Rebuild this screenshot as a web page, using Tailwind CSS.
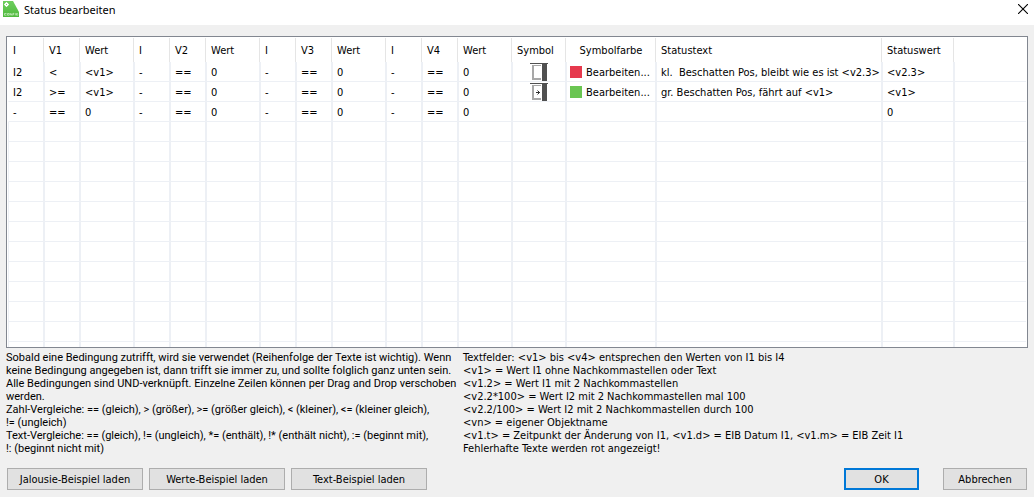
<!DOCTYPE html>
<html lang="de">
<head>
<meta charset="utf-8">
<title>Status bearbeiten</title>
<script src="https://cdn.jsdelivr.net/npm/@tailwindcss/browser@4"></script>
</head>
<body class="flex min-h-screen flex-col overflow-hidden bg-[#f0f0f0] font-['DejaVu_Sans_Condensed','DejaVu_Sans',sans-serif] text-[11px] leading-[13px] text-black">

<header class="flex h-[25px] items-start bg-white pl-[3px] pr-1.5">
  <svg class="size-4 shrink-0 mt-px" viewBox="0 0 16 16" aria-hidden="true">
    <defs><linearGradient id="g" x1="0" y1="0" x2="0" y2="1"><stop offset="0" stop-color="#6fcf5f"/><stop offset="1" stop-color="#4fb83c"/></linearGradient></defs>
    <path d="M0 0H10L16 11V16H0Z" fill="url(#g)"/>
    <circle cx="3.500" cy="3.500" r="1.300" fill="none" stroke="#fff" stroke-width="1.400"/>
    <path d="M3.500 1v1M3.500 5v1M1 3.500h1M5 3.500h1" stroke="#fff" stroke-width=".8"/>
    <path d="M1.500 12.500h2M1.500 14.200h2M1.500 12.500v1.700M4.500 12.500h1.700v1.700h-1.700zM7.300 14.400v-2l1.500 2v-2M9.900 14.400v-2h1.300M9.900 13.300h1M12.300 12.200v2.200M14.800 12.500h-1.300v1.700h1.300v-.8" fill="none" stroke="#d3f0cc" stroke-width=".7"/>
  </svg>
  <h1 class="ml-[5px] mt-0.5 flex-1 font-['Noto_Sans',sans-serif] text-[11px] leading-4">Status bearbeiten</h1>
  <button type="button" aria-label="Schließen" class="mt-1 size-[10px]">
    <svg class="block size-[10px]" viewBox="0 0 10 10"><path d="M0 0L10 10M10 0L0 10" stroke="#000" stroke-width="1.100"/></svg>
  </button>
</header>

<main class="flex flex-col px-1.5 pt-[11px]">
  <div class="h-[312px] overflow-hidden border border-[#828790] bg-white px-px pt-px">
    <table class="w-full table-fixed border-separate border-spacing-0 text-left [&_th]:h-6 [&_th]:border-r [&_th]:border-[#e5e5e5] [&_th]:p-0 [&_th]:pl-[5px] [&_th]:font-normal [&_th:last-child]:border-r-0 [&_td]:h-5 [&_td]:whitespace-pre [&_td]:border-x [&_td]:border-b [&_td]:border-[#edf0f5] [&_td]:p-0 [&_td]:pl-1 [&_td]:pt-px [&_td:first-child]:border-l-transparent [&_td:last-child]:border-r-0">
      <colgroup>
        <col class="w-[36px]"><col class="w-[36px]"><col class="w-[54px]">
        <col class="w-[36px]"><col class="w-[36px]"><col class="w-[54px]">
        <col class="w-[36px]"><col class="w-[36px]"><col class="w-[54px]">
        <col class="w-[36px]"><col class="w-[36px]"><col class="w-[54px]">
        <col class="w-[54px]"><col class="w-[90px]"><col class="w-[226px]"><col class="w-[72px]"><col>
      </colgroup>
      <thead>
        <tr><th>I</th><th>V1</th><th>Wert</th><th>I</th><th>V2</th><th>Wert</th><th>I</th><th>V3</th><th>Wert</th><th>I</th><th>V4</th><th>Wert</th><th>Symbol</th><th><span class="block pr-1 text-center">Symbolfarbe</span></th><th>Statustext</th><th>Statuswert</th><th></th></tr>
      </thead>
      <tbody id="rows">
        <tr><td>I2</td><td>&lt;</td><td>&lt;v1&gt;</td><td>-</td><td>==</td><td>0</td><td>-</td><td>==</td><td>0</td><td>-</td><td>==</td><td>0</td>
          <td class="pt-0!"><svg class="ml-[13px] block h-[19px] w-[18px]" viewBox="0 0 18 19" shape-rendering="crispEdges" role="img" aria-label="Jalousie"><path fill="#fff" d="M2 2h11v15H2z"/><path fill="#a8a8a8" d="M2 3h2v15H2zM2 16h9v2H2zM2 3h9v1H2z"/><path fill="#505050" d="M0 1h18v1H0zM12 2h5v17h-5z"/></svg></td>
          <td><button type="button" class="-ml-px flex items-center whitespace-nowrap"><span class="mr-1 size-3 bg-[#e6394d]"></span>Bearbeiten...</button></td>
          <td>kl.  Beschatten Pos, bleibt wie es ist &lt;v2.3&gt;</td><td>&lt;v2.3&gt;</td><td></td></tr>
        <tr><td>I2</td><td>&gt;=</td><td>&lt;v1&gt;</td><td>-</td><td>==</td><td>0</td><td>-</td><td>==</td><td>0</td><td>-</td><td>==</td><td>0</td>
          <td class="pt-0!"><svg class="ml-[13px] block h-[19px] w-[18px]" viewBox="0 0 18 19" shape-rendering="crispEdges" role="img" aria-label="Jalousie fährt"><path fill="#fff" d="M2 2h11v15H2z"/><path fill="#a8a8a8" d="M2 3h2v15H2zM2 16h9v2H2zM2 3h9v1H2z"/><path fill="#505050" d="M0 1h18v1H0zM12 2h5v17h-5z"/><path fill="#303030" d="M6 10h4v1H6zM8 9h1v3H8z"/><path fill="#999" d="M7 8h1v1H7zM7 12h1v1H7z"/></svg></td>
          <td><button type="button" class="-ml-px flex items-center whitespace-nowrap"><span class="mr-1 size-3 bg-[#6ac552]"></span>Bearbeiten...</button></td>
          <td>gr. Beschatten Pos, fährt auf &lt;v1&gt;</td><td>&lt;v1&gt;</td><td></td></tr>
        <tr><td>-</td><td>==</td><td>0</td><td>-</td><td>==</td><td>0</td><td>-</td><td>==</td><td>0</td><td>-</td><td>==</td><td>0</td><td></td><td></td><td></td><td>0</td><td></td></tr>
      </tbody>
    </table>
  </div>

  <section class="mt-[3px] flex whitespace-nowrap">
    <p class="w-[457px] font-['Roboto',sans-serif]">Sobald eine Bedingung zutrifft, wird sie verwendet (Reihenfolge der Texte ist wichtig). Wenn<br>keine Bedingung angegeben ist, dann trifft sie immer zu, und sollte folglich ganz unten sein.<br>Alle Bedingungen sind UND-verknüpft. Einzelne Zeilen können per Drag and Drop verschoben<br>werden.<br>Zahl-Vergleiche: == (gleich), &gt; (größer), &gt;= (größer gleich), &lt; (kleiner), &lt;= (kleiner gleich),<br>!= (ungleich)<br>Text-Vergleiche: == (gleich), != (ungleich), *= (enthält), !* (enthält nicht), := (beginnt mit),<br>!: (beginnt nicht mit)</p>
    <p>Textfelder: &lt;v1&gt; bis &lt;v4&gt; entsprechen den Werten von I1 bis I4<br>&lt;v1&gt; = Wert I1 ohne Nachkommastellen oder Text<br>&lt;v1.2&gt; = Wert I1 mit 2 Nachkommastellen<br>&lt;v2.2*100&gt; = Wert I2 mit 2 Nachkommastellen mal 100<br>&lt;v2.2/100&gt; = Wert I2 mit 2 Nachkommastellen durch 100<br>&lt;vn&gt; = eigener Objektname<br>&lt;v1.t&gt; = Zeitpunkt der Änderung von I1, &lt;v1.d&gt; = EIB Datum I1, &lt;v1.m&gt; = EIB Zeit I1<br>Fehlerhafte Texte werden rot angezeigt!</p>
  </section>
</main>

<footer class="mt-[13px] flex items-center gap-1.5 pl-[7px] pr-[7px]">
  <button type="button" class="h-[22px] w-[136px] border border-[#adadad] bg-[#e1e1e1]">Jalousie-Beispiel laden</button>
  <button type="button" class="h-[22px] w-[136px] border border-[#adadad] bg-[#e1e1e1]">Werte-Beispiel laden</button>
  <button type="button" class="h-[22px] w-[136px] border border-[#adadad] bg-[#e1e1e1]">Text-Beispiel laden</button>
  <button type="submit" class="ml-auto h-[22px] w-[75px] border-2 border-[#0078d7] bg-[#e1e1e1]">OK</button>
  <button type="button" class="ml-[18px] h-[22px] w-[84px] border border-[#adadad] bg-[#e1e1e1]">Abbrechen</button>
</footer>

<script>
  // Fill the rest of the list with empty grid rows.
  const rows = document.getElementById('rows');
  for (let i = 0; i < 12; i++) {
    const tr = rows.insertRow();
    for (let c = 0; c < 17; c++) tr.insertCell();
    tr.cells[0].className = 'border-l-[#edf0f5]!';
  }
</script>
</body>
</html>
